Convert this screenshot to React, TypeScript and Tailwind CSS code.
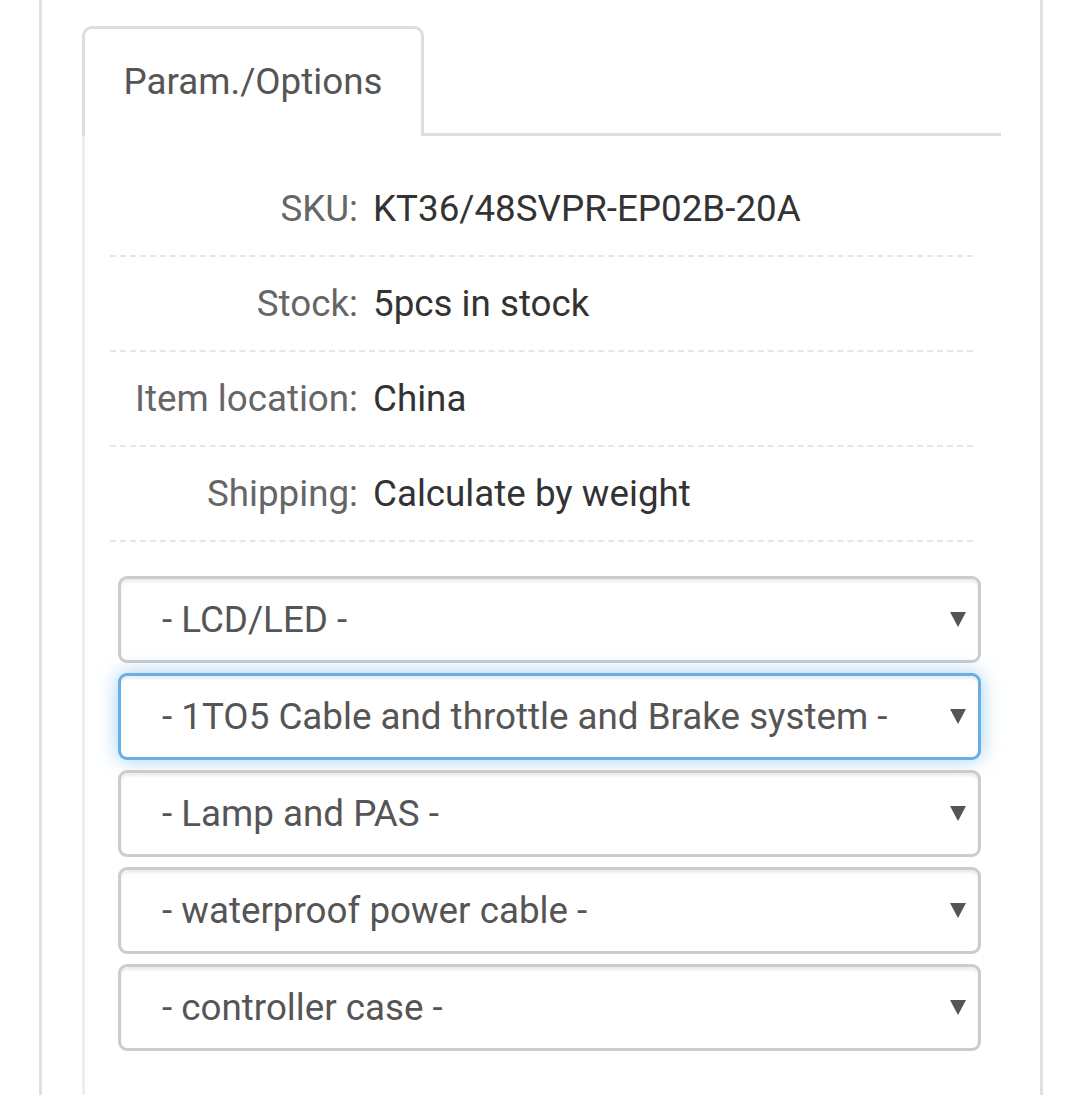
import React from 'react';

type Row = { label: string; value: string };

const rows: Row[] = [
  { label: 'SKU:', value: 'KT36/48SVPR-EP02B-20A' },
  { label: 'Stock:', value: '5pcs in stock' },
  { label: 'Item location:', value: 'China' },
  { label: 'Shipping:', value: 'Calculate by weight' },
];

const options = [
  '- LCD/LED -',
  '- 1TO5 Cable and throttle and Brake system -',
  '- Lamp and PAS -',
  '- waterproof power cable -',
  '- controller case -',
];

const Arrow = () => (
  <svg width="16" height="15" viewBox="0 0 16 15" className="shrink-0">
    <polygon points="0,0 16,0 8,15" fill="#555555" />
  </svg>
);

const OptionSelect: React.FC<{ text: string; focused?: boolean }> = ({ text, focused }) => (
  <div
    className={
      focused
        ? 'flex h-[87px] items-center justify-between rounded-[9px] border-[3px] border-[#66afe9] bg-white pl-[41px] pr-[12px] shadow-[inset_0_3px_3px_rgba(0,0,0,0.075),0_0_20px_rgba(102,175,233,0.6)]'
        : 'flex h-[87px] items-center justify-between rounded-[9px] border-[3px] border-[#cccccc] bg-white pl-[41px] pr-[12px] shadow-[inset_0_3px_3px_rgba(0,0,0,0.075)]'
    }
  >
    <span className="text-[36.75px] text-[#555555]">{text}</span>
    <Arrow />
  </div>
);

export default function App() {
  return (
    <div
      className="h-[1095px] overflow-hidden bg-white"
      style={{ fontFamily: 'Roboto, "Liberation Sans", sans-serif' }}
    >
      <div className="ml-[39px] h-full w-[1004px] border-x-[3px] border-[#e0e0e0] pt-[26px]">
        <div className="ml-[40px] w-[919px]">
          {/* tabs */}
          <div className="flex border-b-[3px] border-[#dddddd]">
            <div className="-mb-[3px] flex h-[110px] w-[342px] items-start justify-center rounded-t-[10px] border-x-[3px] border-t-[3px] border-[#dddddd] bg-white pt-[25px]">
              <span className="text-[36.75px] text-[#555555]">Param./Options</span>
            </div>
          </div>

          {/* panel */}
          <div className="h-[1000px] border-l-[3px] border-[#eeeeee] pl-[25px] pr-[28px] pt-[26px]">
            {rows.map((r) => (
              <div
                key={r.label}
                className="flex h-[95px] items-center border-b-2 border-dashed border-[#e6e6e6]"
              >
                <div className="w-[248px] text-right text-[36.75px] text-[#666666]">{r.label}</div>
                <div className="pl-[15px] text-[36.75px] text-[#333333]">{r.value}</div>
              </div>
            ))}

            <div className="ml-[8px] mt-[34px] flex w-[863px] flex-col gap-[10px]">
              {options.map((o, i) => (
                <OptionSelect key={o} text={o} focused={i === 1} />
              ))}
            </div>
          </div>
        </div>
      </div>
    </div>
  );
}
